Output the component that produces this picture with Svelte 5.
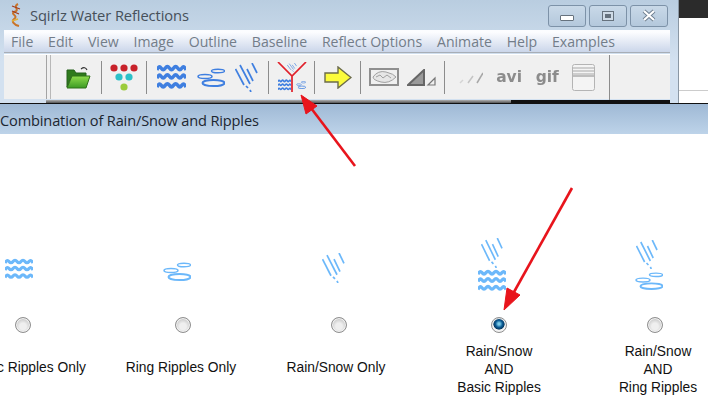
<script>
  const menus = ['File', 'Edit', 'View', 'Image', 'Outline', 'Baseline', 'Reflect Options', 'Animate', 'Help', 'Examples'];

  const choices = [
    { lines: ['Basic Ripples Only'], icons: [{ id: 'waves', x: 12, y: 22, w: 28, h: 22 }] },
    { lines: ['Ring Ripples Only'], icons: [{ id: 'rings', x: 10, y: 26, w: 28, h: 19 }] },
    { lines: ['Rain/Snow Only'], icons: [{ id: 'rain', x: 13, y: 17, w: 23, h: 30 }] },
    {
      lines: ['Rain/Snow', 'AND', 'Basic Ripples'],
      icons: [
        { id: 'rain', x: 12, y: 2, w: 22, h: 30 },
        { id: 'waves', x: 9, y: 33, w: 28, h: 23 }
      ]
    },
    {
      lines: ['Rain/Snow', 'AND', 'Ring Ripples'],
      icons: [
        { id: 'rain', x: 11, y: 4, w: 22, h: 29 },
        { id: 'rings', x: 10, y: 36, w: 28, h: 18 }
      ]
    }
  ];

  let selected = $state(3);
</script>

<svg class="defs" aria-hidden="true">
  <defs>
    <linearGradient id="folder-front" x1="0" y1="0" x2="0" y2="1">
      <stop offset="0" stop-color="#8fdc4c" />
      <stop offset="1" stop-color="#3c9a24" />
    </linearGradient>
  </defs>
  <symbol id="waves" viewBox="0 0 28 22" preserveAspectRatio="none">
    <g fill="none" stroke="currentColor" stroke-width="3.200">
      <path d="M0 5Q2 1 4 3.500T8 3.500T12 3.500T16 3.500T20 3.500T24 3.500T28 5" />
      <path d="M0 12Q2 8 4 10.500T8 10.500T12 10.500T16 10.500T20 10.500T24 10.500T28 12" />
      <path d="M0 19.500Q2 15.500 4 18T8 18T12 18T16 18T20 18T24 18T28 19.500" />
    </g>
  </symbol>
  <symbol id="rings" viewBox="0 0 28 19" preserveAspectRatio="none">
    <g fill="none" stroke="currentColor">
      <ellipse cx="21" cy="3" rx="6.500" ry="1.800" stroke-width="1.500" />
      <ellipse cx="8" cy="8.500" rx="7" ry="2" stroke-width="1.500" />
      <ellipse cx="16.500" cy="15" rx="11" ry="3" stroke-width="2" />
    </g>
  </symbol>
  <symbol id="rain" viewBox="0 0 23 29" preserveAspectRatio="none">
    <g stroke="currentColor" stroke-width="1.700">
      <line x1="0.500" y1="6" x2="9" y2="22" />
      <line x1="5" y1="2" x2="15" y2="21" />
      <line x1="12" y1="6" x2="18" y2="18" />
      <line x1="17" y1="0" x2="22" y2="10" />
      <line x1="11" y1="23" x2="13" y2="25" />
      <line x1="15" y1="27" x2="16" y2="29" />
    </g>
  </symbol>
</svg>

<div class="page">
  <div class="top">
    <div class="window">
      <div class="titlebar">
        <svg class="app-icon" width="14" height="26" viewBox="0 0 14 26">
          <path d="M9 2C3 5 12 8 5 10C1 12 10 14 5 17C2 19 5 23 10 24" fill="none" stroke="#c8742a" stroke-width="2" />
          <path d="M3 4L11 7M3 9L10 12" stroke="#a33c1e" stroke-width="1.200" />
          <path d="M3 19L9 17" stroke="#e2b23a" stroke-width="1.500" />
        </svg>
        <span class="title">Sqirlz Water Reflections</span>
        <div class="win-buttons">
          <div class="win-btn"><span class="min"></span></div>
          <div class="win-btn"><span class="max"></span></div>
          <div class="win-btn close">
            <svg width="14" height="13" viewBox="0 0 14 13">
              <path d="M2 2L12 11M12 2L2 11" stroke="#6f7f90" stroke-width="4" />
              <path d="M2 2L12 11M12 2L2 11" stroke="#fff" stroke-width="2.200" />
            </svg>
          </div>
        </div>
      </div>

      <div class="menubar">
        {#each menus as item}
          <span>{item}</span>
        {/each}
      </div>

      <div class="toolbar">
        <div class="grip"></div>

        <div class="seg seg-open">
          <svg width="25" height="23" viewBox="0 0 25 23">
            <path d="M15 3Q19 0 21 4" fill="none" stroke="#333" stroke-width="1.200" />
            <path d="M1 21L1 4L8 4L10 7L20 7L20 11L5 11Z" fill="#2f7a1c" stroke="#24601a" />
            <path d="M1 22L6 10L24 10L20 22Z" fill="url(#folder-front)" stroke="#2f7019" />
          </svg>
        </div>

        <div class="seg seg-dots">
          <svg width="28" height="28" viewBox="0 0 28 28">
            <circle cx="4" cy="5" r="3.600" fill="#c8222a" />
            <circle cx="14" cy="5" r="3.600" fill="#c8222a" />
            <circle cx="24" cy="5" r="3.600" fill="#c8222a" />
            <circle cx="9" cy="14" r="3.600" fill="#2cc0c8" />
            <circle cx="19" cy="14" r="3.600" fill="#2cc0c8" />
            <circle cx="14" cy="24" r="3.600" fill="#9ccc3c" />
          </svg>
        </div>

        <div class="seg seg-ripples">
          <svg class="blue" width="29" height="26"><use href="#waves" width="29" height="26" /></svg>
          <svg class="blue" width="28" height="19"><use href="#rings" width="28" height="19" /></svg>
          <svg class="blue" width="23" height="29"><use href="#rain" width="23" height="29" /></svg>
        </div>

        <div class="seg seg-combo">
          <svg width="30" height="30" viewBox="0 0 30 30">
            <g class="blue">
              <use href="#rain" x="10" y="1" width="10" height="9" />
              <use href="#waves" x="1" y="17" width="13" height="12" />
              <use href="#rings" x="19" y="19" width="10" height="8" />
            </g>
            <path d="M1 0L15 14L29 0M15 14L15 30" fill="none" stroke="#e0202a" stroke-width="1.700" />
          </svg>
        </div>

        <div class="seg seg-arrow">
          <svg width="28" height="23" viewBox="0 0 28 23">
            <path d="M1 7L14 7L14 1L27 11.500L14 22L14 16L1 16Z" fill="#fbfb3c" stroke="#6b6b4a" stroke-width="1.400" />
          </svg>
        </div>

        <div class="seg seg-view">
          <svg width="30" height="18" viewBox="0 0 30 18">
            <rect x="1" y="1" width="28" height="16" fill="#f0f0f0" stroke="#8f8f8f" stroke-width="2" />
            <path d="M4 9Q9 2 17 4T27 9Q20 16 12 14T4 9Z" fill="#e6e6e6" stroke="#a0a0a0" />
            <path d="M7 9L11 7L14 10L18 7L22 10" fill="none" stroke="#a0a0a0" />
          </svg>
          <svg width="29" height="17" viewBox="0 0 29 17">
            <path d="M1 16L17 1L17 16Z" fill="#9a9a9a" stroke="#666" stroke-width="2" />
            <path d="M21 16L28 9L28 16Z" fill="none" stroke="#777" stroke-width="1.200" />
          </svg>
        </div>

        <div class="seg seg-output">
          <svg width="24" height="14" viewBox="0 0 24 14">
            <g stroke-width="1.500" fill="none">
              <path d="M1 13L4 10" stroke="#d4d4d4" />
              <path d="M9 13L14 6" stroke="#c4c4c4" />
              <path d="M18 13L24 3" stroke="#a8a8a8" />
            </g>
          </svg>
          <span class="file-type">avi</span>
          <span class="file-type">gif</span>
          <svg width="23" height="27" viewBox="0 0 23 27">
            <rect x="0.500" y="0.500" width="22" height="26" rx="2" fill="#f4f4f4" stroke="#b4b4b4" />
            <path d="M1 4H22M1 7H22M1 10H22" stroke="#a8a8a8" />
            <path d="M1 12H22" stroke="#888" />
          </svg>
        </div>
      </div>

      <div class="shadow"></div>
    </div>

    <div class="side">
      <div class="side-dark"></div>
      <div class="side-white"></div>
      <div class="side-low"></div>
    </div>
  </div>

  <div class="panel-head">Combination of Rain/Snow and Ripples</div>

  <div class="choices">
    {#each choices as choice, i}
      <div class="choice">
        <svg class="choice-icon" width="60" height="60">
          {#each choice.icons as icon}
            <use href={'#' + icon.id} x={icon.x} y={icon.y} width={icon.w} height={icon.h} />
          {/each}
        </svg>
        <input type="radio" name="combo" checked={selected === i} onchange={() => (selected = i)} />
        <div class="label">
          {#each choice.lines as line}
            <div>{line}</div>
          {/each}
        </div>
      </div>
    {/each}
  </div>

  <svg class="arrows" width="708" height="415" viewBox="0 0 708 415">
    <g fill="#e8141c" stroke="#e8141c">
      <line x1="355" y1="166" x2="311" y2="108" stroke-width="2.600" />
      <path d="M301 95L317 106L306 114Z" />
      <line x1="572" y1="188" x2="514" y2="292" stroke-width="2.600" />
      <path d="M504 310L507 288L520 295Z" />
    </g>
  </svg>
</div>

<style>
  :global(body) {
    margin: 0;
    background: #fff;
  }

  .defs {
    position: absolute;
    width: 0;
    height: 0;
  }

  .page {
    position: relative;
    width: 708px;
    height: 415px;
    overflow: hidden;
    background: #fff;
    font-family: "Open Sans", "Liberation Sans", sans-serif;
  }

  .top {
    display: flex;
    height: 103px;
    border-bottom: 1px solid #111;
  }

  .window {
    width: 679px;
    flex: none;
    padding: 0 8px 0 4px;
    box-sizing: border-box;
    display: flex;
    flex-direction: column;
    background: linear-gradient(#b9cde0, #d3e1f0 60%);
    border-right: 1px solid #8a97a4;
  }

  .titlebar {
    height: 30px;
    flex: none;
    display: flex;
    align-items: center;
  }

  .app-icon {
    margin: 0 7px 0 5px;
  }

  .title {
    font-size: 14.700px;
    color: #46505a;
    letter-spacing: -0.100px;
  }

  .win-buttons {
    margin-left: auto;
    margin-right: 2px;
    margin-top: 1px;
    display: flex;
    gap: 3px;
  }

  .win-btn {
    width: 36px;
    height: 20px;
    border: 1px solid #7d92a8;
    border-radius: 3px;
    display: flex;
    align-items: center;
    justify-content: center;
    background: linear-gradient(#c9d9e8, #b4c8dc);
  }

  .min {
    width: 12px;
    height: 4px;
    margin-top: 5px;
    background: #fff;
    border: 1px solid #66727e;
    border-radius: 1px;
  }

  .max {
    width: 10px;
    height: 8px;
    background: #dbe5ef;
    border: 1px solid #66727e;
    box-shadow: inset 0 0 0 2px #cfdbe7, inset 0 0 0 4px #66727e;
  }

  .menubar {
    height: 23px;
    flex: none;
    box-sizing: border-box;
    padding: 1px 0 0 7px;
    display: flex;
    align-items: center;
    background: linear-gradient(#fcfdff 10%, #cbd6ea);
    border-bottom: 1px solid #a8aeb6;
    font-size: 14.100px;
    color: #737d89;
    gap: 14.800px;
  }

  .toolbar {
    height: 45px;
    flex: none;
    margin-top: 1px;
    display: flex;
    align-items: center;
    background: #f0f0f0;
    border-top: 1px solid #fff;
    box-sizing: border-box;
  }

  .grip {
    width: 5px;
    height: 100%;
    margin-left: 42px;
    flex: none;
    box-sizing: border-box;
    border-left: 1px solid #a4a4a4;
    border-right: 1px solid #b8b8b8;
  }

  .seg {
    height: 33px;
    flex: none;
    box-sizing: border-box;
    display: flex;
    align-items: center;
    justify-content: space-evenly;
    border-right: 1px solid #8c8c8c;
  }

  .seg-open { width: 51px; padding-left: 5px; }
  .seg-dots { width: 45px; }
  .seg-ripples { width: 122px; }
  .seg-combo { width: 46px; }
  .seg-arrow { width: 46px; }
  .seg-view { width: 84px; }

  .seg-output {
    width: 165px;
    height: 45px;
  }

  .blue {
    color: #3f7fe0;
  }

  .file-type {
    font-family: "DejaVu Sans", sans-serif;
    font-size: 15.500px;
    font-weight: 700;
    color: #8c8c8c;
    filter: blur(0.500px);
  }

  .shadow {
    height: 3px;
    flex: none;
    margin-top: auto;
    margin-left: 42px;
    background:
      linear-gradient(90deg, transparent 0 74.500%, #111 74.500%),
      linear-gradient(#b0b0b0, #555);
  }

  .side {
    flex: 1;
    display: flex;
    flex-direction: column;
  }

  .side-dark {
    height: 18px;
    background: #2b2b2b;
  }

  .side-white {
    flex: 1;
    background: #fff;
    border-bottom: 1px solid #ccc;
  }

  .side-low {
    height: 12px;
    background: #fff;
  }

  .panel-head {
    height: 30px;
    box-sizing: border-box;
    padding-top: 6px;
    background: linear-gradient(#9fb9d5, #bdd3e9);
    font-size: 14.600px;
    letter-spacing: -0.150px;
    color: #1c2630;
    white-space: nowrap;
  }

  .choices {
    display: grid;
    grid-template-columns: 160px 160px 152px 168px 144px;
    margin-left: -57px;
    padding-top: 102px;
  }

  .choice {
    display: flex;
    flex-direction: column;
    align-items: center;
    font-family: "Liberation Sans", Arial, sans-serif;
    font-size: 13.800px;
    color: #111;
  }

  .choice-icon {
    color: #6cb8fa;
  }

  input[type="radio"] {
    appearance: none;
    width: 16px;
    height: 16px;
    margin: 21px 0 0;
    border-radius: 50%;
    border: 1px solid #8f8f8f;
    background: radial-gradient(circle at 50% 60%, #efefef 0 30%, #c4c4c4 75%);
    box-shadow: inset 0 0 0 1px #f2f2f2;
  }

  input[type="radio"]:checked {
    background: radial-gradient(circle at 50% 42%, #7ccbe8 0 10%, #0b5c96 32%, #063a62 50%, #f2f2f2 56%);
  }

  .label {
    height: 54px;
    margin-top: 10px;
    display: flex;
    flex-direction: column;
    justify-content: center;
    text-align: center;
    line-height: 18px;
    white-space: nowrap;
  }

  /* single line labels sit a bit above centre, and none are quite under their radio */
  .choice:nth-child(-n + 3) .label {
    padding-bottom: 4px;
    box-sizing: border-box;
  }

  .choice:nth-child(1) .label { margin-left: 10px; }
  .choice:nth-child(2) .label { margin-right: 4px; }
  .choice:nth-child(3) .label { margin-right: 6px; }
  .choice:nth-child(5) .label { margin-left: 6px; }

  .arrows {
    position: absolute;
    left: 0;
    top: 0;
    pointer-events: none;
  }
</style>
